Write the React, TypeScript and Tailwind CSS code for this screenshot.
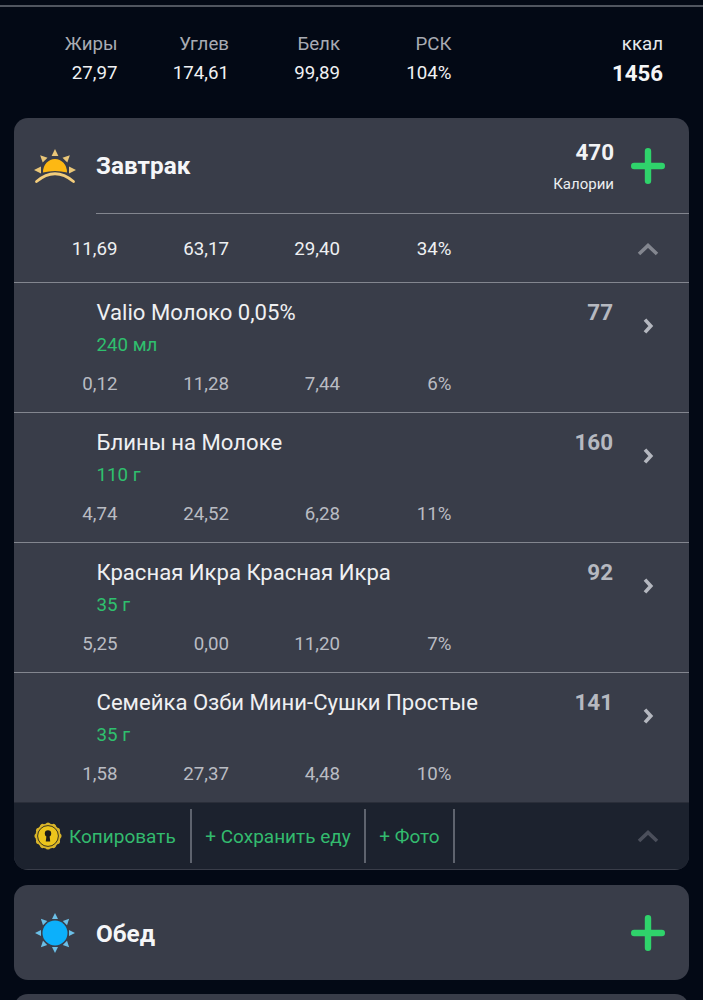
function Nums({ v, cls }: { v: string[]; cls: string }) {
  return (
    <div className={"flex text-[18.7px] leading-[24px] " + cls}>
      <div className="w-[103.5px] text-right">{v[0]}</div>
      <div className="w-[111.5px] text-right">{v[1]}</div>
      <div className="w-[111px] text-right">{v[2]}</div>
      <div className="w-[111.5px] text-right">{v[3]}</div>
    </div>
  );
}
function Chevron() {
  return (
    <svg width="12" height="18" viewBox="0 0 12 18" className="block">
      <path d="M3 2.6 L8.8 9 L3 15.4" fill="none" stroke="#b4b7bf" strokeWidth="3.6" />
    </svg>
  );
}
function Up({ color }: { color: string }) {
  return (
    <svg width="24" height="16" viewBox="0 0 24 16" className="block">
      <path d="M3 13 L12 4.5 L21 13" fill="none" stroke={color} strokeWidth="3.6" />
    </svg>
  );
}
function Plus() {
  return (
    <svg width="34" height="36" viewBox="0 0 34 36" className="block">
      <path d="M17 3.2 V32.8 M3.2 18 H30.8" stroke="#2fd36b" strokeWidth="6.4" strokeLinecap="round" />
    </svg>
  );
}
const rays = [0, 45, 90, 135, 180, 225, 270, 315];
function Sunrise() {
  return (
    <svg width="42" height="36" viewBox="0 0 42 36" className="block">
      {[-90, -45, 45, 90, 0].map((a) => (
        <path key={a} d="M21 1 L24.4 8 L17.6 8 Z" fill="#e9c678" transform={`rotate(${a} 21 22)`} />
      ))}
      <path d="M9 24.4 A12 13.5 0 0 1 33 24.4 Q21 21.4 9 24.4 Z" fill="#fdb813" />
      <path d="M2.5 33.5 Q21 18 39.5 33.5" fill="none" stroke="#f3cd7c" strokeWidth="2.8" strokeLinecap="round" />
    </svg>
  );
}
function Sun() {
  return (
    <svg width="42" height="42" viewBox="0 0 42 42" className="block">
      {rays.map((a) => (
        <path key={a} d="M21 1 L24 7 L18 7 Z" fill="#6cbfe6" transform={`rotate(${a} 21 21)`} />
      ))}
      <circle cx="21" cy="21" r="12.5" fill="#0cb0fb" />
    </svg>
  );
}
const teeth = Array.from({ length: 12 }, (_, i) => i * 30);
function Medal() {
  return (
    <svg width="28" height="28" viewBox="0 0 28 28" className="block">
      <circle cx="14" cy="14" r="12.6" fill="#d9b52a" />
      {teeth.map((a) => (
        <circle key={a} cx="14" cy="2.6" r="2.2" fill="#d9b52a" transform={`rotate(${a} 14 14)`} />
      ))}
      <circle cx="14" cy="14" r="10.4" fill="#ecc51c" stroke="#3a3520" strokeWidth="1" />
      <circle cx="14" cy="11.4" r="3.2" fill="#1d1d1a" />
      <path d="M12.6 12 H15.4 L16.2 19.6 H11.8 Z" fill="#1d1d1a" />
    </svg>
  );
}
const items = [
  { n: "Valio Молоко 0,05%", a: "240 мл", k: "77", v: ["0,12", "11,28", "7,44", "6%"] },
  { n: "Блины на Молоке", a: "110 г", k: "160", v: ["4,74", "24,52", "6,28", "11%"] },
  { n: "Красная Икра Красная Икра", a: "35 г", k: "92", v: ["5,25", "0,00", "11,20", "7%"] },
  { n: "Семейка Озби Мини-Сушки Простые", a: "35 г", k: "141", v: ["1,58", "27,37", "4,48", "10%"] },
];
export default function App() {
  return (
    <div className="h-[1000px] overflow-hidden bg-[#030915] font-['Roboto',sans-serif]">
      <div className="pt-[5px]">
        <div className="h-[2px] bg-[#50555f]" />
      </div>
      <div className="flex h-[111px] justify-between pl-[14px] pr-[40px] pt-[25px]">
        <div>
          <Nums v={["Жиры", "Углев", "Белк", "РСК"]} cls="text-[#a8abb3]" />
          <Nums v={["27,97", "174,61", "99,89", "104%"]} cls="mt-[5px] text-[#f0f1f3]" />
        </div>
        <div className="text-right">
          <div className="text-[18.7px] leading-[24px] text-[#e8e9ec]">ккал</div>
          <div className="mt-[5px] text-[22.2px] font-bold leading-[25px] text-[#f5f6f7]">1456</div>
        </div>
      </div>
      <div className="mx-[14px] h-[752px] overflow-hidden rounded-[14px] bg-[#393d49]">
        <div className="flex h-[95px] items-center pl-[20px] pr-[24px]">
          <div className="w-[62px]"><Sunrise /></div>
          <div className="flex-1 pt-[2px] text-[24.3px] font-bold text-[#f5f6f8]">Завтрак</div>
          <div className="mr-[17px] pt-[2px] text-right">
            <div className="text-[22.4px] font-bold leading-[26px] text-[#f2f3f5]">470</div>
            <div className="mt-[9px] text-[15px] leading-[20px] text-[#eceef0]">Калории</div>
          </div>
          <Plus />
        </div>
        <div className="ml-[82px] h-[1px] bg-[#83868f]" />
        <div className="flex h-[68px] items-center justify-between pr-[29px]">
          <div className="pt-[2px]"><Nums v={["11,69", "63,17", "29,40", "34%"]} cls="text-[#eef0f2]" /></div>
          <div className="pt-[1px]"><Up color="#83868f" /></div>
        </div>
        {items.map((it) => (
          <div key={it.n} className="h-[130px] border-t border-[#83868f]">
            <div className="flex items-start pl-[82.5px] pr-[35px] pt-[15px]">
              <div className="flex-1">
                <div className="text-[22.1px] leading-[28px] text-[#eff0f2]">{it.n}</div>
                <div className="mt-[7px] text-[18.7px] leading-[24px] text-[#2fc06e]">{it.a}</div>
              </div>
              <div className="text-[22.4px] font-bold leading-[28px] text-[#b6b9c0]">{it.k}</div>
              <div className="ml-[29px] mt-[19px]"><Chevron /></div>
            </div>
            <Nums v={it.v} cls="mt-[15px] text-[#b9bcc3]" />
          </div>
        ))}
        <div className="flex h-[67px] items-center border-t border-[#2a2e39] bg-[#1c222e] pr-[29px]">
          <div className="flex h-[54px] w-[178px] items-center border-r-2 border-[#5e636e] pl-[20px]">
            <Medal />
            <span className="ml-[7px] pt-[2px] text-[19px] text-[#33bb6e]">Копировать</span>
          </div>
          <div className="flex h-[54px] w-[174px] items-center justify-center border-r-2 border-[#5e636e] pt-[2px] text-[19px] text-[#33bb6e]">+ Сохранить еду</div>
          <div className="flex h-[54px] w-[89px] items-center justify-center border-r-2 border-[#5e636e] pt-[2px] text-[19px] text-[#33bb6e]">+ Фото</div>
          <div className="flex-1" />
          <Up color="#4b4f5b" />
        </div>
      </div>
      <div className="mx-[14px] mt-[15px] flex h-[95px] items-center rounded-[14px] bg-[#393d49] pl-[20px] pr-[24px]">
        <div className="w-[62px]"><Sun /></div>
        <div className="flex-1 pt-[3px] text-[24.3px] font-bold text-[#f5f6f8]">Обед</div>
        <Plus />
      </div>
      <div className="mx-[14px] mt-[14px] h-[60px] rounded-[14px] bg-[#393d49]" />
    </div>
  );
}
